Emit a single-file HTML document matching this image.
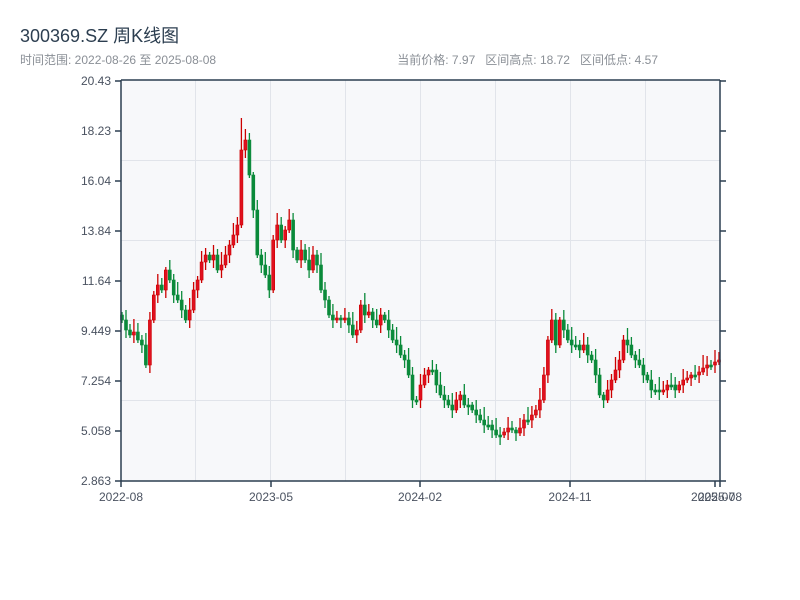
<!DOCTYPE html>
<html><head><meta charset="utf-8"><style>
body{margin:0;background:#fff;width:800px;height:600px;overflow:hidden;font-family:"Liberation Sans","Noto Sans CJK SC",sans-serif;}
.t{position:absolute;left:20px;top:22px;font-size:18px;color:#2c3e50;}
.s{position:absolute;left:20px;top:51px;font-size:12px;color:#8a8f96;}
.r{position:absolute;right:142px;top:51px;font-size:12px;color:#8a8f96;}
svg{position:absolute;left:0;top:0}
</style></head><body>
<div class="t">300369.SZ 周K线图</div>
<div class="s">时间范围: 2022-08-26 至 2025-08-08</div>
<div class="r">当前价格: 7.97 &nbsp; 区间高点: 18.72 &nbsp; 区间低点: 4.57</div>
<svg id="c" width="800" height="600" xmlns="http://www.w3.org/2000/svg">
<rect x="121" y="80" width="599" height="401" fill="#f7f8fa"/>
<g stroke="#e1e4ea" stroke-width="1">
<line x1="195.5" y1="80" x2="195.5" y2="481"/><line x1="270.5" y1="80" x2="270.5" y2="481"/>
<line x1="345.5" y1="80" x2="345.5" y2="481"/><line x1="420.5" y1="80" x2="420.5" y2="481"/>
<line x1="495.5" y1="80" x2="495.5" y2="481"/><line x1="570.5" y1="80" x2="570.5" y2="481"/>
<line x1="645.5" y1="80" x2="645.5" y2="481"/>
<line x1="121" y1="160.5" x2="720" y2="160.5"/><line x1="121" y1="240.5" x2="720" y2="240.5"/>
<line x1="121" y1="320.5" x2="720" y2="320.5"/><line x1="121" y1="400.5" x2="720" y2="400.5"/>
</g>
<g id="k"></g>
<g stroke="#2c3e50" stroke-width="1.5" fill="none">
<line x1="121" y1="80" x2="720" y2="80"/><line x1="121" y1="481" x2="720" y2="481"/>
<line x1="121" y1="80" x2="121" y2="481"/><line x1="720" y1="80" x2="720" y2="481"/>
<path d="M115 81H121M115 131H121M115 181H121M115 231H121M115 281H121M115 331H121M115 381H121M115 431H121M115 481H121"/>
<path d="M720 81H726M720 131H726M720 181H726M720 231H726M720 281H726M720 331H726M720 381H726M720 431H726M720 481H726"/>
<path d="M121 481V487M271 481V487M420 481V487M570 481V487M715 481V487M720 481V487"/>
</g>
<g font-size="12" fill="#4a5260" text-anchor="end" font-family="Liberation Sans,sans-serif">
<text x="111" y="85">20.43</text><text x="111" y="135">18.23</text><text x="111" y="185">16.04</text>
<text x="111" y="235">13.84</text><text x="111" y="285">11.64</text><text x="111" y="335">9.449</text>
<text x="111" y="385">7.254</text><text x="111" y="435">5.058</text><text x="111" y="485">2.863</text>
</g>
<g font-size="12" fill="#4a5260" text-anchor="middle" font-family="Liberation Sans,sans-serif">
<text x="121" y="501">2022-08</text><text x="271" y="501">2023-05</text><text x="420" y="501">2024-02</text>
<text x="570" y="501">2024-11</text><text x="713" y="501">2025-07</text><text x="720" y="501">2025-08</text>
</g>
</svg>
<script>
(function(){
var c=[320,330,335,332,340,345,365,320,295,285,290,270,280,295,300,310,320,310,290,280,262,255,260,255,270,265,255,245,235,225,150,140,175,210,255,265,275,290,240,225,240,230,220,250,260,250,260,270,255,265,290,300,315,320,318,320,318,325,335,330,305,315,312,320,325,315,320,330,340,345,355,360,375,400,400,385,375,370,370,385,395,400,405,410,400,395,405,405,410,415,420,425,425,430,435,435,432,428,430,433,428,420,420,415,410,400,375,340,320,345,320,330,340,345,345,350,345,355,360,375,395,400,390,380,370,360,340,345,355,360,365,375,380,390,390,392,390,385,385,390,385,380,378,375,375,372,368,365,365,362,360];
var NS="http://www.w3.org/2000/svg",g=document.getElementById("k");
function el(t,a){var e=document.createElementNS(NS,t);for(var k in a)e.setAttribute(k,String(a[k]));g.appendChild(e);}
var n=c.length,st=(719-122)/(n-1),prev=315;
for(var i=0;i<n;i++){var o=prev,cl=c[i];var x=122+i*st;var up=cl<o;
var bt=Math.min(o,cl),bb=Math.max(o,cl);if(bb-bt<2)bb=bt+2;
var hi=bt-(3+((i*7)%11)),lo=bb+(3+((i*5)%10));
if(i==30)hi=118;
var col=up?"#cc0000":"#0a8a3a";
el("line",{x1:x.toFixed(1),y1:hi,x2:x.toFixed(1),y2:lo,stroke:col,"stroke-width":1.3});
el("rect",{x:(x-1.5).toFixed(1),y:bt,width:3,height:bb-bt,fill:up?"#e0101f":col,stroke:col,"stroke-width":0.6});
prev=cl;}
})();
</script>
</body></html>
